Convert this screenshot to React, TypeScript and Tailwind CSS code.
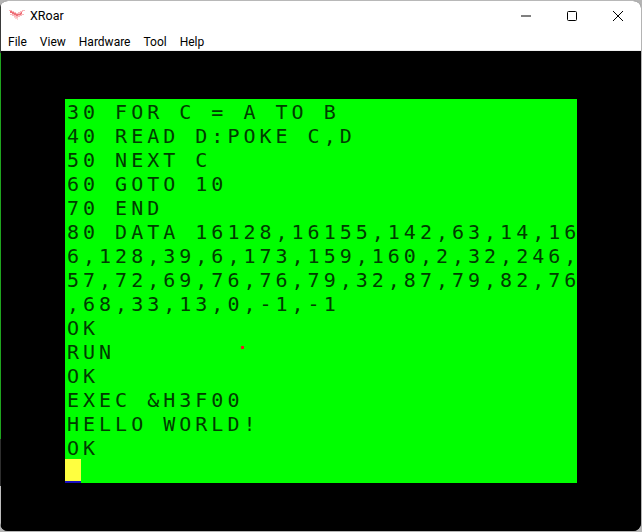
import React from 'react';

const LINES = [
  '30 FOR C = A TO B',
  '40 READ D:POKE C,D',
  '50 NEXT C',
  '60 GOTO 10',
  '70 END',
  '80 DATA 16128,16155,142,63,14,16',
  '6,128,39,6,173,159,160,2,32,246,',
  '57,72,69,76,76,79,32,87,79,82,76',
  ',68,33,13,0,-1,-1',
  'OK',
  'RUN',
  'OK',
  'EXEC &H3F00',
  'HELLO WORLD!',
  'OK',
];

const MENU = ['File', 'View', 'Hardware', 'Tool', 'Help'];

// pixelly pink dragon from the title bar
const DragonIcon = () => (
  <svg width="17" height="13" viewBox="0 0 17 13" shapeRendering="crispEdges">
    <path d="M0 2h3v1h2v1h2v1h2V4h2V3h2V2h3v1h-2v1h-1v2h2v1h-2v1h-2v1H9v1H7V9H5V8H3V7H1V6h3V5H2V4H1V3H0z" fill="#f9b9bd" />
    <path d="M1 3h2v1h2v1h2v1h4V5h1V4h1v2h-1v1H9v1H7V7H5V6H3V5H1z" fill="#ee6f78" />
    <path d="M5 9h2v1h2v2H8v-1H6v-1H5z" fill="#fbd3d5" />
  </svg>
);

const WindowButton = ({ children }: { children: React.ReactNode }) => (
  <div className="w-[46px] h-[30px] flex items-center justify-center text-black">{children}</div>
);

export default function App() {
  return (
    <div className="w-[642px] h-[532px] bg-[#b4b4b4] overflow-hidden">
      <div className="w-[641px] h-[531px] flex rounded-[8px] overflow-hidden bg-black border-t border-[#b8b8b8]">
        {/* left edge shows what is behind the window */}
        <div className="w-px flex flex-col shrink-0">
          <div className="h-[52px] bg-[#3a3a3a]" />
          <div className="h-[386px] bg-[#1fa51f]" />
          <div className="h-[47px] bg-[#2e2e2e]" />
          <div className="flex-1 bg-[#bdbdbd]" />
        </div>

        <div className="flex-1 flex flex-col min-w-0 font-['Roboto',sans-serif] text-[12px] text-black">
          {/* Title bar */}
          <div className="h-[30px] bg-white flex items-center shrink-0">
            <div className="ml-[8px] mt-[-3px]">
              <DragonIcon />
            </div>
            <span className="ml-[4px] flex-1 text-[12.5px]">XRoar</span>
            <div className="flex">
              <WindowButton>
                <svg width="10" height="10" viewBox="0 0 10 10">
                  <path d="M0 5h10" stroke="#000" strokeWidth="1" />
                </svg>
              </WindowButton>
              <WindowButton>
                <svg width="10" height="10" viewBox="0 0 10 10">
                  <rect x="0.5" y="0.5" width="9" height="9" rx="1" fill="none" stroke="#000" />
                </svg>
              </WindowButton>
              <WindowButton>
                <svg width="10" height="10" viewBox="0 0 10 10">
                  <path d="M0 0l10 10M10 0L0 10" stroke="#000" strokeWidth="1" />
                </svg>
              </WindowButton>
            </div>
          </div>

          {/* Menu */}
          <div className="h-[20px] bg-white flex items-center gap-[13px] pl-[7px] pt-[3px] shrink-0 border-b border-[#f0f0f0]">
            {MENU.map((item) => (
              <span key={item}>{item}</span>
            ))}
          </div>

          {/* Emulator display */}
          <div className="flex-1 bg-black pt-[48px] pl-[64px]">
            <div className="relative w-[512px] h-[384px] bg-[#00ff00] font-['DejaVu_Sans_Mono',monospace] text-[20px] leading-[24px] tracking-[4px] text-[#003c00]">
              {LINES.map((line, i) => (
                <div key={i} className="h-[24px] pl-[2px] pt-[1px] whitespace-pre">
                  {line}
                </div>
              ))}
              <div className="w-[16px] h-[24px] bg-[#ffff40] border-b-2 border-[#1a10c0]" />
              <div className="absolute left-[176px] top-[247px] w-[3px] h-[3px] bg-[#e02020]" />
            </div>
          </div>
        </div>
      </div>
    </div>
  );
}
